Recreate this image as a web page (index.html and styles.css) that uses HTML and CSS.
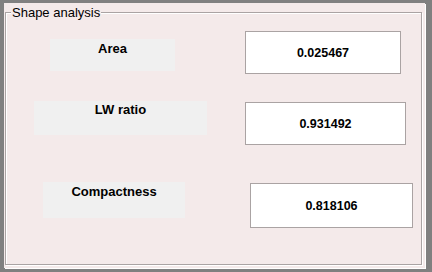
FILE: index.html
```
<!DOCTYPE html>
<html lang="en">

<head>
    <meta charset="UTF-8" />
    <meta name="viewport" content="width=device-width, initial-scale=1.0" />
    <title>Shape analysis</title>
    <link rel="stylesheet" href="styles.css">
</head>

<body>

    <div class="window">
        <div class="group">
            <span class="group-title">Shape analysis</span>

            <div class="row row-area">
                <div class="label">Area</div>
                <div class="value">0.025467</div>
            </div>

            <div class="row row-lw">
                <div class="label">LW ratio</div>
                <div class="value">0.931492</div>
            </div>

            <div class="row row-compact">
                <div class="label">Compactness</div>
                <div class="value">0.818106</div>
            </div>
        </div>
    </div>

</body>

</html>
```

FILE: styles.css
```
body {
    margin: 0;
    width: 432px;
    height: 272px;
    background: #808080;
    font-family: "Liberation Sans", Arial, sans-serif;
    color: #000;
    overflow: hidden;
}

.window {
    margin: 3px 0 0 4px;
    width: 421px;
    height: 265px;
    background: #f4eaea;
    padding: 9px 0 0 1px;
    box-sizing: border-box;
    box-shadow: 1px 1px 0 #fff;
}

.group {
    position: relative;
    width: 417px;
    height: 253px;
    box-sizing: border-box;
    border: 1px solid #aaa3a3;
    box-shadow: 1px 1px 0 #fff, inset 1px 1px 0 #fff;
}

.group-title {
    position: absolute;
    top: -8px;
    left: 5px;
    padding: 0 1px;
    background: #f4eaea;
    font-size: 13px;
    line-height: 15px;
}

.row {
    display: flex;
    align-items: flex-start;
}

.label {
    background: #f0f0f0;
    font-size: 13px;
    font-weight: bold;
    line-height: 15px;
    text-align: center;
    padding-top: 2px;
    box-sizing: border-box;
}

.value {
    display: flex;
    align-items: center;
    justify-content: center;
    background: #fff;
    border: 1px solid #aaa3a3;
    box-sizing: border-box;
    font-size: 12.5px;
    font-weight: bold;
}

/* each row sits where the original dialog put it */
.row-area {
    margin-top: 18px;
}

.row-area .label {
    margin: 8px 0 0 44px;
    width: 125px;
    height: 32px;
}

.row-area .value {
    margin-left: 70px;
    width: 156px;
    height: 43px;
}

.row-lw {
    margin-top: 27px;
}

.row-lw .label {
    margin-left: 28px;
    width: 173px;
    height: 34px;
    padding-top: 1px;
}

.row-lw .value {
    margin: 1px 0 0 38px;
    width: 161px;
    height: 43px;
}

.row-compact {
    margin-top: 37px;
}

.row-compact .label {
    margin-left: 37px;
    width: 142px;
    height: 36px;
}

.row-compact .value {
    margin: 1px 0 0 65px;
    width: 163px;
    height: 45px;
}
```
